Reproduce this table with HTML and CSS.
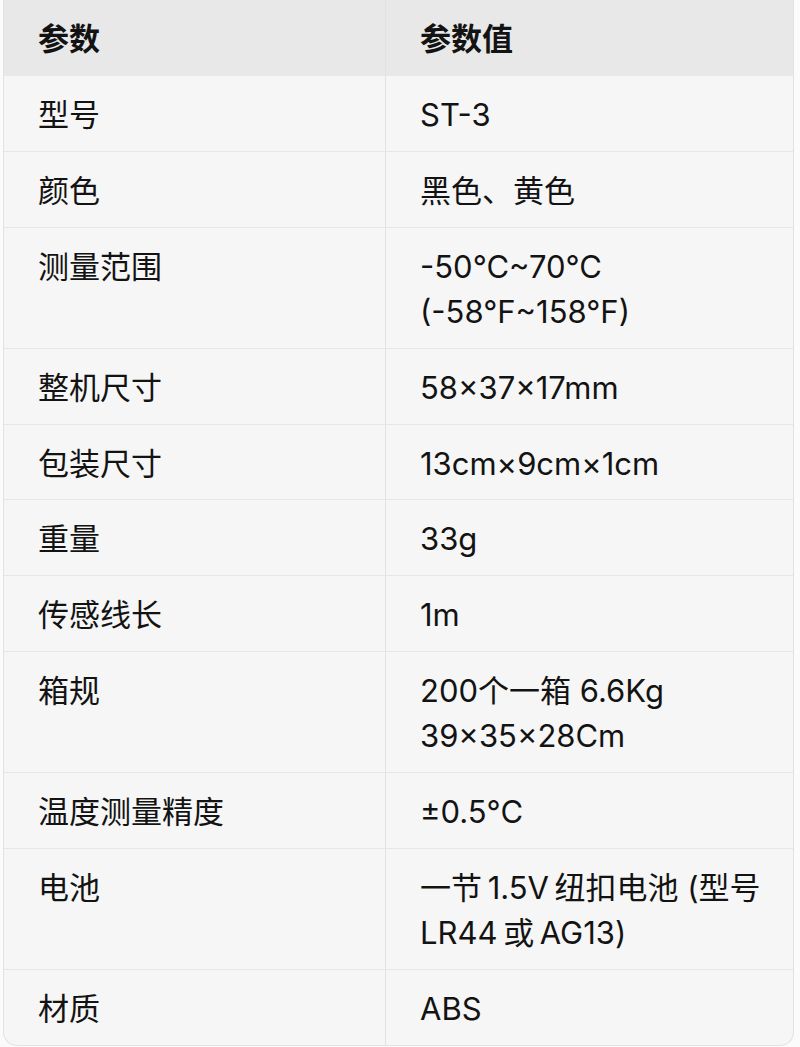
FILE: index.html
```html
<!DOCTYPE html>
<html lang="zh-CN">
<head>
<meta charset="utf-8">
<link rel="stylesheet" href="styles.css">
</head>
<body>
<div class="spec-table">
  <div class="row head"><div class="cell">参数</div><div class="cell">参数值</div></div>
  <div class="row"><div class="cell">型号</div><div class="cell">ST-3</div></div>
  <div class="row"><div class="cell">颜色</div><div class="cell">黑色、黄色</div></div>
  <div class="row"><div class="cell">测量范围</div><div class="cell">-50°C~70°C<br>(-58°F~158°F)</div></div>
  <div class="row"><div class="cell">整机尺寸</div><div class="cell">58×37×17mm</div></div>
  <div class="row"><div class="cell">包装尺寸</div><div class="cell">13cm×9cm×1cm</div></div>
  <div class="row"><div class="cell">重量</div><div class="cell">33g</div></div>
  <div class="row"><div class="cell">传感线长</div><div class="cell">1m</div></div>
  <div class="row"><div class="cell">箱规</div><div class="cell">200个一箱 6.6Kg<br>39×35×28Cm</div></div>
  <div class="row"><div class="cell">温度测量精度</div><div class="cell">±0.5°C</div></div>
  <div class="row"><div class="cell">电池</div><div class="cell">一节&#8201;1.5V&#8201;纽扣电池 (型号<br>LR44&#8201;或&#8201;AG13)</div></div>
  <div class="row last"><div class="cell">材质</div><div class="cell">ABS</div></div>
</div>
</body>
</html>
```
FILE: styles.css
```css
html, body {
  margin: 0;
  padding: 0;
  background: #fbfbfb;
}
body {
  font-family: "Inter", "Noto Sans CJK SC", sans-serif;
  color: #131313;
}
.spec-table {
  margin-left: 3px;
  width: 789px;
  background: #f6f6f6;
  border: 1px solid #e2e2e2;
  border-top: none;
  border-radius: 0 0 14px 14px;
  overflow: hidden;
}
.row {
  display: grid;
  grid-template-columns: 381px 1fr;
  border-bottom: 1px solid #e6e6e6;
}
.row.last {
  border-bottom: none;
}
.cell {
  font-size: 31px;
  line-height: 45px;
  padding: 16px 20px 13.9px 34px;
  white-space: nowrap;
}
.cell + .cell {
  border-left: 1px solid #e2e2e2;
}
.head {
  background: #e8e8e8;
  border-bottom: none;
}
.head .cell {
  font-weight: 600;
  padding-top: 16px;
  padding-bottom: 15px;
}
```
